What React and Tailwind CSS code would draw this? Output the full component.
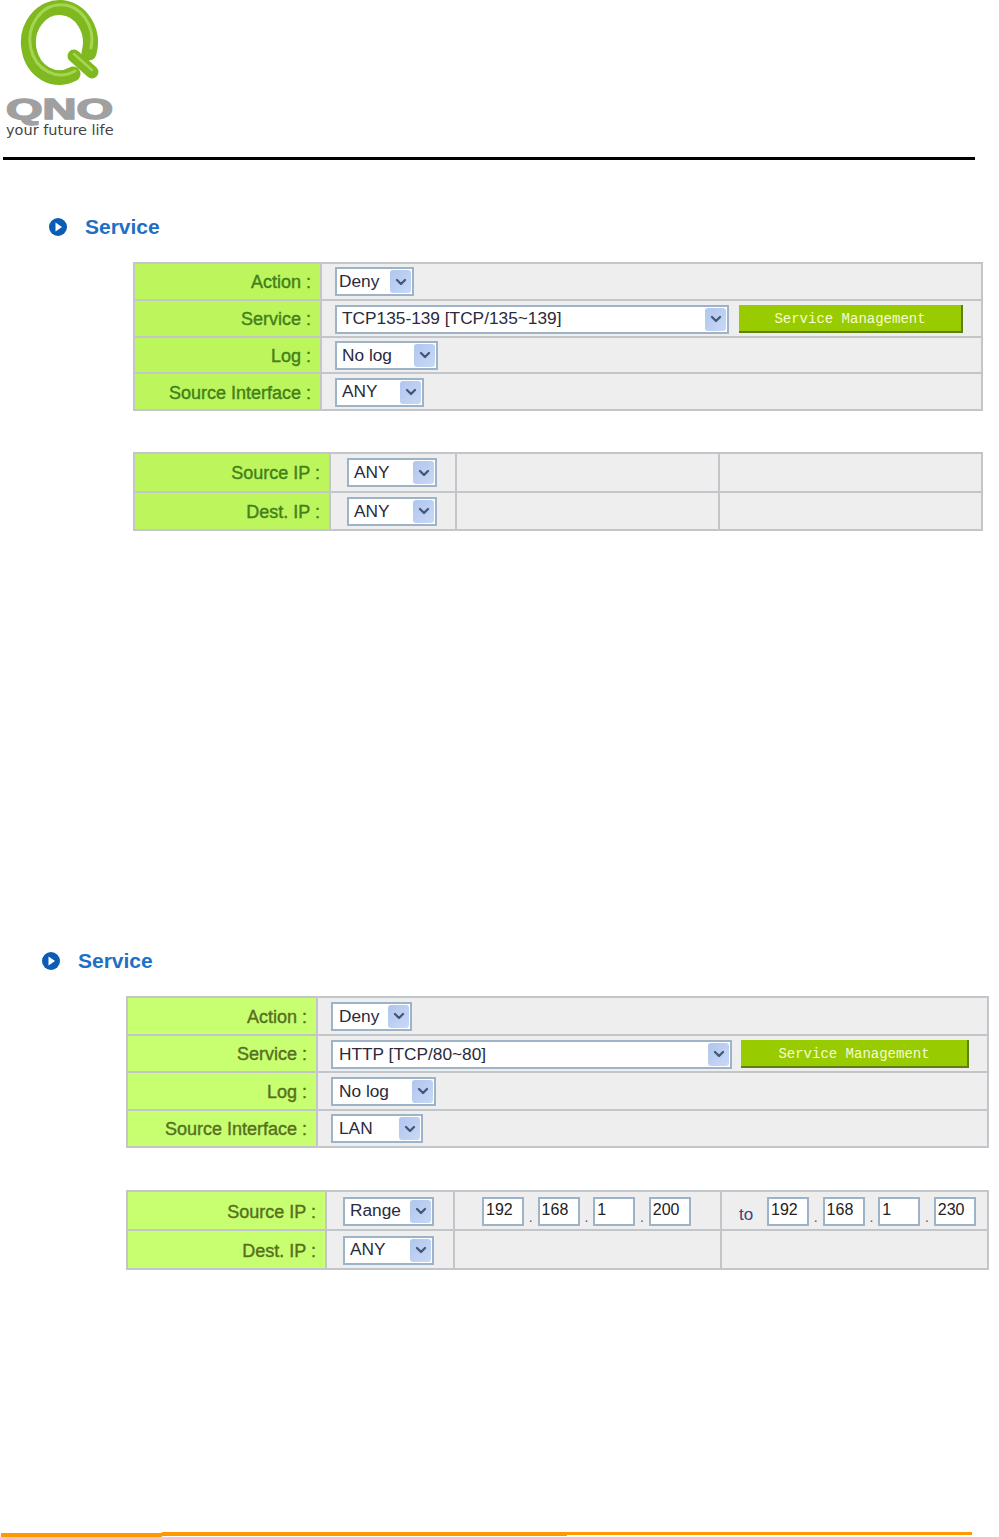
import React from "react";
import { ChevronDown } from "lucide-react";

const LOGO_GREEN = "#7fb81f";

function Logo() {
  return (
    <div className="w-[116px] h-[140px] flex flex-col">
      <svg width="116" height="88" viewBox="0 0 116 88" className="shrink-0 -ml-[1px]">
        <path d="M87 53 A31 35 0 1 0 71 74" fill="none" stroke={LOGO_GREEN} strokeWidth="15" strokeLinecap="round" />
        <path d="M87 51 A31 35 0 1 0 71 74" fill="none" stroke="#a5d651" strokeWidth="3" strokeLinecap="round" transform="translate(2 -3)" />
        <path d="M72 56 L90 72" fill="none" stroke={LOGO_GREEN} strokeWidth="13" strokeLinecap="round" />
        <path d="M72 54 L90 70" fill="none" stroke="#a5d651" strokeWidth="2.5" strokeLinecap="round" />
      </svg>
      <svg width="116" height="32" viewBox="0 0 116 32" className="shrink-0 mt-[1px] overflow-visible">
        <text
          x="3"
          y="30"
          textLength="107"
          lengthAdjust="spacingAndGlyphs"
          fontFamily="'Liberation Sans', sans-serif"
          fontWeight="700"
          fontSize="29"
          fill="#a0a0a0"
          stroke="#a0a0a0"
          strokeWidth="1.5"
        >
          QNO
        </text>
      </svg>
      <div className="mt-[1px] ml-[3px] font-['DejaVu_Sans',sans-serif] text-[14.5px] leading-[17px] text-[#444] whitespace-nowrap">
        your future life
      </div>
    </div>
  );
}

function Heading({ className }) {
  return (
    <div className={`flex items-center h-[24px] ${className}`}>
      <svg width="18" height="18" viewBox="0 0 18 18" className="shrink-0">
        <circle cx="9" cy="9" r="9" fill="#0b5cb5" />
        <path d="M6.5 4.5 L13 9 L6.5 13.5 Z" fill="#fff" />
      </svg>
      <span className="ml-[18px] text-[21px] leading-[24px] font-bold text-[#1f6fc4]">Service</span>
    </div>
  );
}

function Select({ value, className }) {
  return (
    <div className={`h-[29px] flex items-center justify-between bg-white border-2 border-[#9db3c8] pr-[1px] ${className}`}>
      <span className="text-[17.3px] leading-none text-[#2a2a3c] whitespace-nowrap">{value}</span>
      <span className="w-[21px] h-[23px] flex items-center justify-center bg-linear-to-br from-[#b0c6ee] to-[#c9d9f6] rounded-[3px]">
        <ChevronDown size={16} strokeWidth={3.5} color="#44587a" />
      </span>
    </div>
  );
}

function ServiceButton({ className }) {
  return (
    <div className={`h-[28px] pt-[2px] flex items-center justify-center bg-[#99cc00] border-r-2 border-b-2 border-[#5f7f10] font-['Liberation_Mono',monospace] text-[14px] text-[#f6fbd2] whitespace-nowrap ${className}`}>
      Service Management
    </div>
  );
}

function IpBox({ value }) {
  return (
    <div className="w-[42px] h-[29px] bg-white border-2 border-[#9db3c8] pl-[2px] text-[16px] leading-[22px] text-[#222]">
      {value}
    </div>
  );
}

function IpRange({ parts }) {
  return (
    <div className="flex items-center">
      {parts.map((p, i) => (
        <React.Fragment key={i}>
          <IpBox value={p} />
          {i < 3 && (
            <span className="w-[13.6px] self-end text-center text-[14px] leading-[18px] text-[#6a4a9a]">.</span>
          )}
        </React.Fragment>
      ))}
    </div>
  );
}

const labelCls = "border-2 border-[#c2c6ca] text-right pr-[9px] pt-[2px] text-[18px] leading-none whitespace-nowrap";
const cellCls = "border-2 border-[#c2c6ca] bg-[#eeeeee] pt-[1px]";

// the two screenshots in the page have slightly different greens
const toneTop = "bg-[#bcf65c] text-[#437f1a] [-webkit-text-stroke:0.4px_#437f1a]";
const toneBottom = "bg-[#c8ff70] text-[#56701f] [-webkit-text-stroke:0.4px_#56701f]";

function RuleTable({ width, labelWidth, rowHeight, tone, rows }) {
  return (
    <table className={`border-collapse table-fixed ${width}`}>
      <colgroup>
        <col className={labelWidth} />
        <col />
      </colgroup>
      <tbody>
        {rows.map((r) => (
          <tr key={r.label} className={rowHeight}>
            <td className={`${labelCls} ${tone}`}>{r.label} :</td>
            <td className={`${cellCls} pl-[13px]`}>
              <div className="flex items-center">{r.content}</div>
            </td>
          </tr>
        ))}
      </tbody>
    </table>
  );
}

function IpTable({ width, cols, rowHeight, tone, rows }) {
  return (
    <table className={`border-collapse table-fixed ${width}`}>
      <colgroup>
        <col className={cols[0]} />
        <col className={cols[1]} />
        <col className={cols[2]} />
        <col />
      </colgroup>
      <tbody>
        {rows.map((r) => (
          <tr key={r.label} className={rowHeight}>
            <td className={`${labelCls} ${tone}`}>{r.label} :</td>
            <td className={`${cellCls} pl-[16px]`}>{r.select}</td>
            <td className={`${cellCls} pl-[27px]`}>{r.from}</td>
            <td className={`${cellCls} pl-[17px]`}>{r.to}</td>
          </tr>
        ))}
      </tbody>
    </table>
  );
}

export default function App() {
  return (
    <div className="w-[999px] h-[1537px] bg-white flex flex-col font-['Liberation_Sans',Arial,sans-serif] overflow-hidden">
      <div className="pl-[3px]">
        <Logo />
      </div>
      <div className="ml-[3px] mt-[17px] w-[972px] h-[3px] bg-black" />

      <Heading className="ml-[49px] mt-[55px]" />
      <div className="ml-[133px] mt-[23px]">
        <RuleTable
          width="w-[850px]"
          labelWidth="w-[187px]"
          rowHeight="h-[36.75px]"
          tone={toneTop}
          rows={[
            { label: "Action", content: <Select value="Deny" className="w-[79px] pl-[2px]" /> },
            {
              label: "Service",
              content: (
                <>
                  <Select value="TCP135-139 [TCP/135~139]" className="w-[394px] pl-[5px] mt-[1px]" />
                  <ServiceButton className="ml-[10px] w-[224px] mt-[1px]" />
                </>
              ),
            },
            { label: "Log", content: <Select value="No log" className="w-[103px] pl-[5px]" /> },
            { label: "Source Interface", content: <Select value="ANY" className="w-[89px] pl-[5px]" /> },
          ]}
        />
      </div>
      <div className="ml-[133px] mt-[41px]">
        <IpTable
          width="w-[850px]"
          cols={["w-[196px]", "w-[126px]", "w-[263px]"]}
          rowHeight="h-[38.5px]"
          tone={toneTop}
          rows={[
            { label: "Source IP", select: <Select value="ANY" className="w-[90px] pl-[5px]" /> },
            { label: "Dest. IP", select: <Select value="ANY" className="w-[90px] pl-[5px]" /> },
          ]}
        />
      </div>

      <Heading className="ml-[42px] mt-[418px]" />
      <div className="ml-[126px] mt-[23px]">
        <RuleTable
          width="w-[863px]"
          labelWidth="w-[190px]"
          rowHeight="h-[37.5px]"
          tone={toneBottom}
          rows={[
            { label: "Action", content: <Select value="Deny" className="w-[81px] pl-[6px]" /> },
            {
              label: "Service",
              content: (
                <>
                  <Select value="HTTP [TCP/80~80]" className="w-[401px] pl-[6px] mt-[1px]" />
                  <ServiceButton className="ml-[9px] w-[228px] mt-[1px]" />
                </>
              ),
            },
            { label: "Log", content: <Select value="No log" className="w-[105px] pl-[6px]" /> },
            { label: "Source Interface", content: <Select value="LAN" className="w-[92px] pl-[6px]" /> },
          ]}
        />
      </div>
      <div className="ml-[126px] mt-[42px]">
        <IpTable
          width="w-[863px]"
          cols={["w-[199px]", "w-[128px]", "w-[267px]"]}
          rowHeight="h-[39px]"
          tone={toneBottom}
          rows={[
            {
              label: "Source IP",
              select: <Select value="Range" className="w-[91px] pl-[5px]" />,
              from: <IpRange parts={["192", "168", "1", "200"]} />,
              to: (
                <div className="flex items-center">
                  <span className="w-[28px] mt-[6px] text-[17px] leading-none text-[#44407a]">to</span>
                  <IpRange parts={["192", "168", "1", "230"]} />
                </div>
              ),
            },
            { label: "Dest. IP", select: <Select value="ANY" className="w-[91px] pl-[5px]" /> },
          ]}
        />
      </div>

      <div className="mt-auto ml-[1px] flex items-start">
        <div className="mt-[1px] w-[161px] h-[4px] bg-[#ff9900]" />
        <div className="w-[405px] h-[4px] bg-[#ff9900]" />
        <div className="w-[405px] h-[3px] bg-[#ff9900]" />
      </div>
    </div>
  );
}
